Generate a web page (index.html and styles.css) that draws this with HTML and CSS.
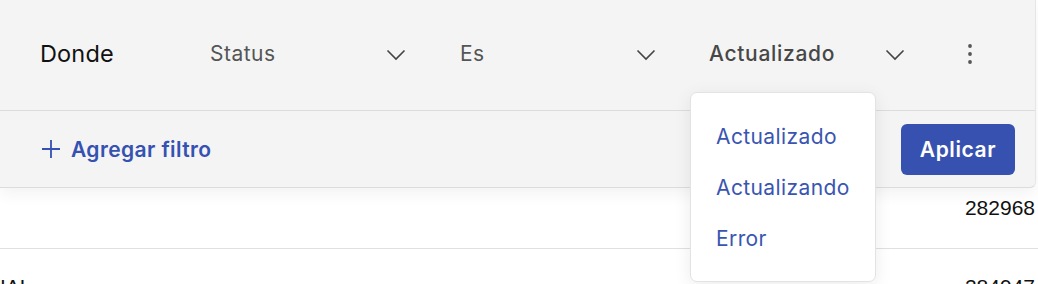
FILE: index.html
```html
<!DOCTYPE html>
<html lang="es">
<head>
<meta charset="utf-8">
<link rel="stylesheet" href="styles.css">
</head>
<body>
<div class="page">
  <section class="filter-panel">
    <div class="filter-row">
      <span class="where">Donde</span>
      <div class="select select-field">
        <span class="select-label">Status</span>
        <svg class="chevron" viewBox="0 0 20 12" width="20" height="12"><path d="M1.5 1.5 L10 10 L18.5 1.5" fill="none" stroke="#444" stroke-width="1.6"/></svg>
      </div>
      <div class="select select-op">
        <span class="select-label">Es</span>
        <svg class="chevron" viewBox="0 0 20 12" width="20" height="12"><path d="M1.5 1.5 L10 10 L18.5 1.5" fill="none" stroke="#444" stroke-width="1.6"/></svg>
      </div>
      <div class="select select-value">
        <span class="select-label strong">Actualizado</span>
        <svg class="chevron" viewBox="0 0 20 12" width="20" height="12"><path d="M1.5 1.5 L10 10 L18.5 1.5" fill="none" stroke="#444" stroke-width="1.6"/></svg>
        <ul class="menu">
          <li>Actualizado</li>
          <li>Actualizando</li>
          <li>Error</li>
        </ul>
      </div>
      <button class="kebab" aria-label="Más opciones">
        <svg viewBox="0 0 6 22" width="6" height="22"><circle cx="3" cy="3" r="1.9" fill="#555"/><circle cx="3" cy="11" r="1.9" fill="#555"/><circle cx="3" cy="19" r="1.9" fill="#555"/></svg>
      </button>
    </div>
    <div class="action-row">
      <button class="add-filter">
        <svg viewBox="0 0 20 20" width="20" height="20"><path d="M10 1 V19 M1 10 H19" stroke="#3551b1" stroke-width="1.8" fill="none"/></svg>
        <span>Agregar filtro</span>
      </button>
      <button class="apply">Aplicar</button>
    </div>
  </section>
  <div class="table">
    <div class="trow"><span class="left"></span><span class="num">282968</span></div>
    <div class="trow"><span class="left">IAL</span><span class="num">284947</span></div>
  </div>
</div>
</body>
</html>
```
FILE: styles.css
```css
* { box-sizing: border-box; }
html, body { margin: 0; padding: 0; background: #fff; overflow: hidden; }
body { font-family: Inter, "Noto Sans", sans-serif; width: 1038px; height: 284px; }
.page { position: relative; }

.filter-panel {
  width: 1036px;
  background: #f4f4f4;
  border-bottom: 1px solid #dcdcdc;
  border-right: 1px solid #e6e6e6;
  border-bottom-right-radius: 6px;
  box-shadow: 0 6px 16px rgba(0,0,0,0.05);
  position: relative;
  z-index: 1;
}

.filter-row {
  height: 111px;
  border-bottom: 1px solid #dcdcdc;
  display: flex;
  align-items: center;
  padding-left: 40px;
  padding-bottom: 3px;
}
.where { font-size: 23.5px; color: #111; width: 170px; letter-spacing: 0.15px; }

.select { display: flex; align-items: center; justify-content: space-between; position: relative; }
.select-field { width: 196px; margin-right: 54px; }
.select-op { width: 196px; margin-right: 53px; }
.select-value { width: 196px; margin-right: 62px; }
.select-label { font-size: 21px; color: #555; letter-spacing: 0.5px; }
.select-label.strong { font-weight: 500; color: #474747; font-size: 21px; letter-spacing: 0.7px; }
.chevron { display: block; margin-top: 2px; }

.kebab { background: none; border: 0; padding: 0; display: flex; margin-top: 0; }
.kebab svg { display: block; }

.action-row {
  height: 76px;
  display: flex;
  align-items: center;
  justify-content: space-between;
  padding: 0 20px 0 41px;
}
.add-filter {
  display: flex; align-items: center; gap: 10px;
  background: none; border: 0; padding: 0;
  font-family: inherit; font-size: 21px; font-weight: 600; color: #3551b1;
  letter-spacing: 0.4px;
}
.add-filter svg { display: block; }
.apply {
  width: 114px; height: 51px;
  background: #3651b0; color: #fff; border: 0; border-radius: 6px;
  font-family: inherit; font-size: 21px; font-weight: 600; letter-spacing: 0.6px;
  margin-top: 0;
}

.menu {
  position: absolute;
  left: -19px; top: 51px;
  width: 186px; height: 190px;
  margin: 0; padding: 18px 0 0 25px;
  list-style: none;
  background: #fff;
  border: 1px solid #e3e3e3;
  border-radius: 7px;
  box-shadow: 0 4px 18px rgba(0,0,0,0.08);
  z-index: 5;
}
.menu li { font-size: 21px; color: #3a55b1; height: 51px; line-height: 51px; letter-spacing: 0.4px; }

.table { margin-top: 0; }
.trow {
  height: 61px;
  display: flex; justify-content: space-between; align-items: flex-start;
  border-bottom: 1px solid #e0e0e0;
  font-family: "Liberation Sans", Arial, sans-serif;
  font-size: 21px; color: #111;
}
.trow .num { margin-right: 3px; padding-top: 8px; }
.trow .left { margin-left: 0; }
.trow:nth-child(2) .num { padding-top: 26px; }
.trow:nth-child(2) .left { padding-top: 26px; }
```
